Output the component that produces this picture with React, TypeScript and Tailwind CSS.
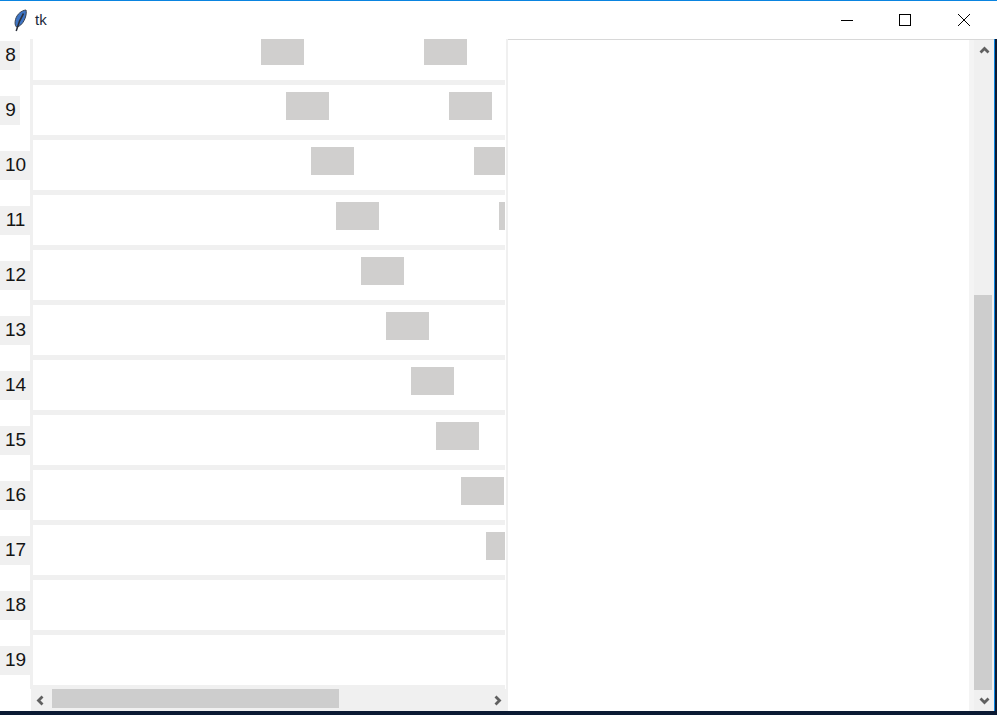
const ROWS = [8, 9, 10, 11, 12, 13, 14, 15, 16, 17, 18, 19];

function Feather() {
  return (
    <svg width="13" height="23" viewBox="0 0 13 23" className="shrink-0">
      <path d="M12 1 C7.5 1.5 3 5 1.5 10.5 C0.8 13.5 0.8 16.5 2.5 18 C6.5 17.5 10 13 11.5 8 C12.3 5.2 12.5 2.8 12 1 Z" fill="#3d74c4" stroke="#39424f" strokeWidth="1" />
      <path d="M9.5 4.5 C7 8.5 4.5 13 2.2 22" stroke="#2a2f3a" strokeWidth="1.5" fill="none" />
    </svg>
  );
}

function Arrow({ d }: { d: string }) {
  return (
    <svg width="11" height="11" viewBox="0 0 11 11">
      <path d={d} stroke="#606060" strokeWidth="2.8" fill="none" />
    </svg>
  );
}

function Row({ n, index }: { n: number; index: number }) {
  const left = 228 + index * 25;
  return (
    <div className="flex h-[55px] shrink-0">
      <div className="w-[30px] shrink-0 h-[50px] flex items-center">
        <div
          className={
            (n < 10 ? 'w-5 ' : 'w-[30px] ') +
            'h-[29px] bg-[#f0f0f0] flex items-center justify-center pl-px text-[19px] text-[#141414]'
          }
        >
          {n}
        </div>
      </div>
      <div className="w-[3px] shrink-0 bg-[#f0f0f0]" />
      <div className="w-[472px] shrink-0 flex flex-col">
        <div className="flex-1 bg-white overflow-hidden relative">
          {n <= 17 && <div className="absolute top-[7px] h-[28px] w-[43px] bg-[#d0cfce]" style={{ left }} />}
          {n <= 11 && <div className="absolute top-[7px] h-[28px] w-[43px] bg-[#d0cfce]" style={{ left: left + 163 }} />}
        </div>
        <div className="h-[5px] bg-[#f0f0f0]" />
      </div>
    </div>
  );
}

export default function App() {
  return (
    <div className="w-[997px] h-[715px] flex flex-col overflow-hidden bg-white border-t border-[#0a84e0] font-['Liberation_Sans',sans-serif]">
      <div className="h-[38px] shrink-0 flex items-center pl-[14px] bg-white">
        <Feather />
        <span className="ml-2 text-[15px] text-[#1a2a3a]">tk</span>
        <div className="ml-auto flex items-center pr-[4px]">
          <div className="w-[58px] flex justify-center pr-[2px]">
            <div className="w-[12px] h-px bg-black" />
          </div>
          <div className="w-[58px] flex justify-center pr-[2px]">
            <div className="w-[12px] h-[12px] border border-black" />
          </div>
          <div className="w-[58px] flex justify-center">
            <svg width="12" height="12" viewBox="0 0 12 12">
              <path d="M0 0 L12 12 M12 0 L0 12" stroke="black" strokeWidth="1" />
            </svg>
          </div>
        </div>
      </div>

      <div className="flex-1 min-h-0 flex">
        <div className="w-[508px] shrink-0 flex flex-col">
          <div className="flex-1 min-h-0 flex">
            <div className="w-[505px] shrink-0 overflow-hidden">
              <div className="-mt-[9px] flex flex-col">
                {ROWS.map((n, i) => (
                  <Row key={n} n={n} index={i} />
                ))}
              </div>
            </div>
            <div className="w-px shrink-0" />
            <div className="w-[2px] shrink-0 bg-[#f0f0f0]" />
          </div>
          <div className="h-[22px] shrink-0 ml-[31px] bg-[#f0f0f0] flex items-center">
            <div className="w-[21px] flex justify-center pr-[2px]">
              <Arrow d="M7.5 1.5 L3.5 5.5 L7.5 9.5" />
            </div>
            <div className="w-[287px] h-[19px] self-start bg-[#cdcdcd]" />
            <div className="ml-auto w-[21px] flex justify-center">
              <Arrow d="M3.5 1.5 L7.5 5.5 L3.5 9.5" />
            </div>
          </div>
        </div>

        <div className="flex-1 border-t border-[#d8d8d8] bg-white" />

        <div className="w-[5px] shrink-0 bg-[#f4f4f4] border-t border-[#d8d8d8]" />
        <div className="w-[20px] shrink-0 bg-[#f0f0f0] flex flex-col border-t border-[#d8d8d8]">
          <div className="h-[21px] flex items-center justify-center">
            <Arrow d="M1.5 7.5 L5.5 3.5 L9.5 7.5" />
          </div>
          <div className="flex-1 flex flex-col justify-end pr-[2px]">
            <div className="h-[395px] bg-[#cdcdcd]" />
          </div>
          <div className="h-[21px] flex items-center justify-center">
            <Arrow d="M1.5 3.5 L5.5 7.5 L9.5 3.5" />
          </div>
        </div>
        <div className="w-[3px] shrink-0 bg-[#0b1a33] border-l border-[#0a84e0]" />
      </div>
      <div className="h-[4px] shrink-0 bg-[#0b1a33]" />
    </div>
  );
}
